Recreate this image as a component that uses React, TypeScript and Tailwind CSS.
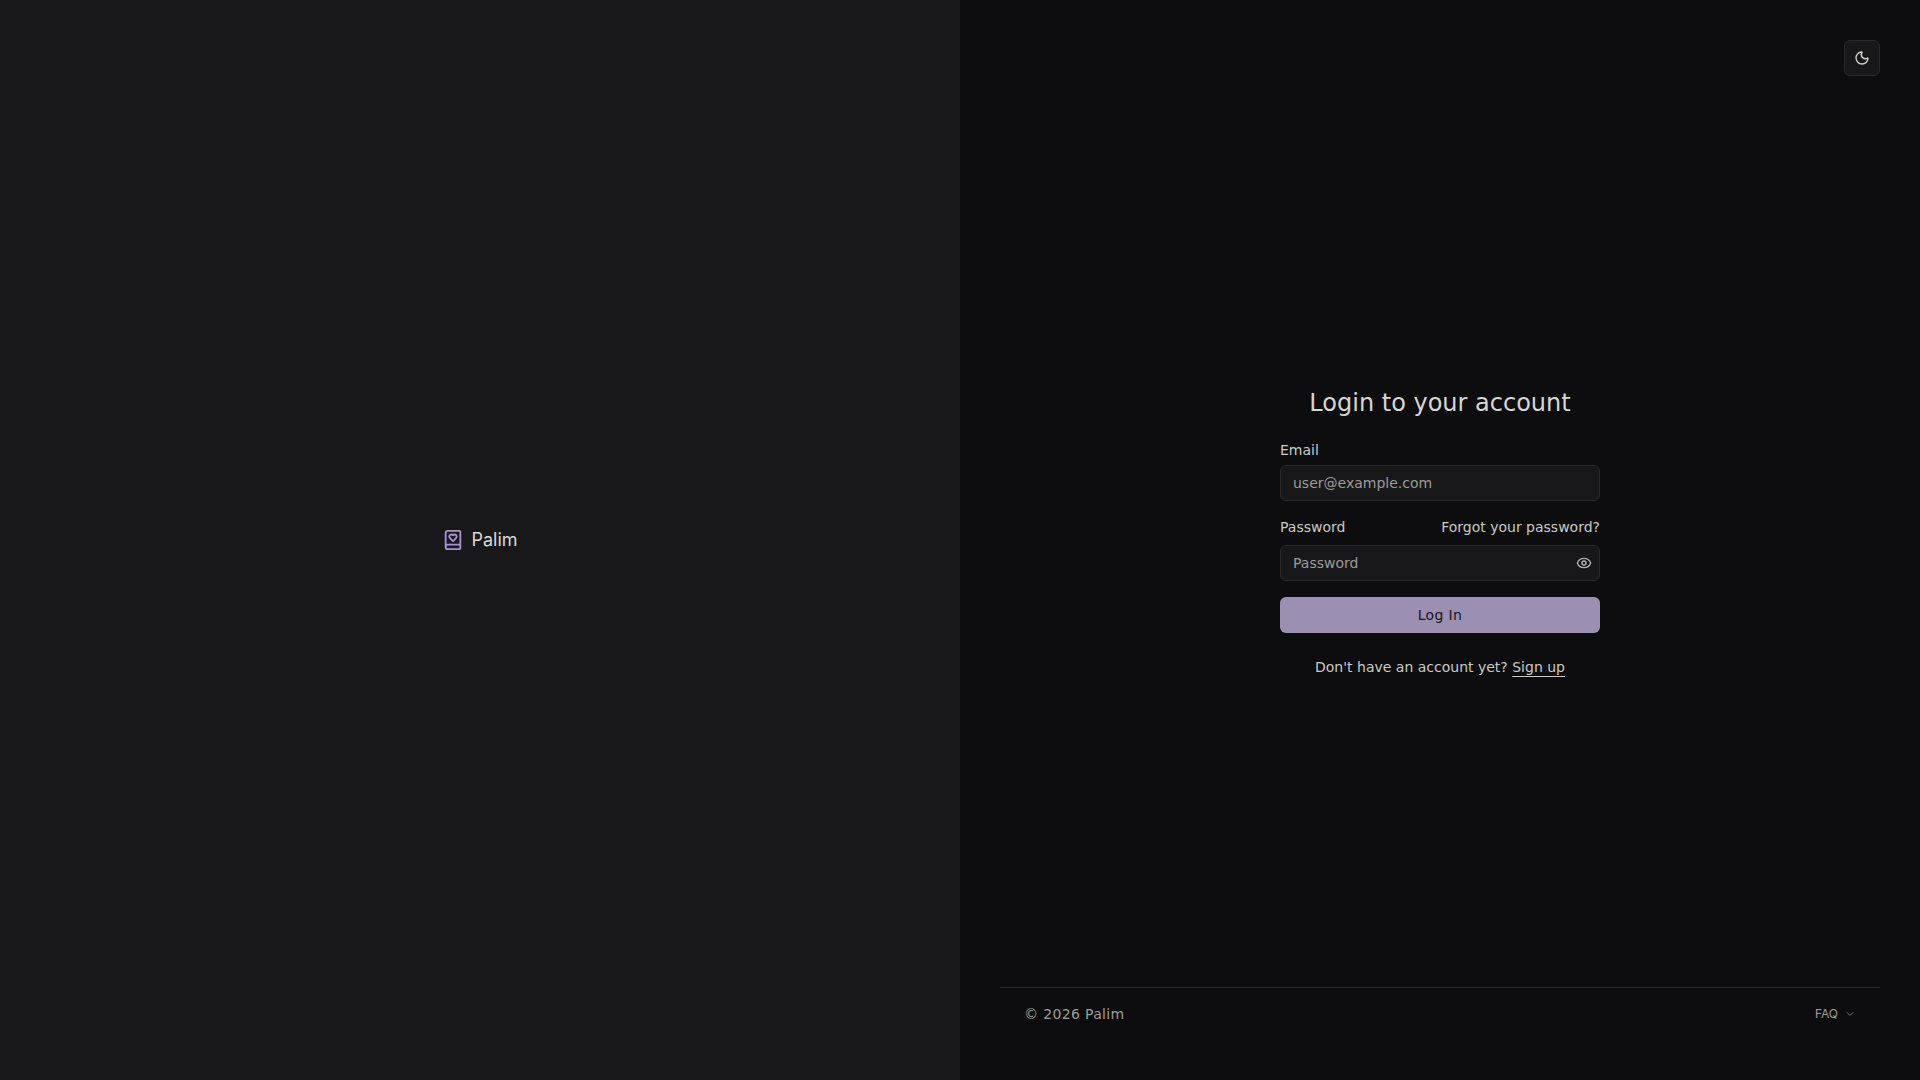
import { BookHeart, ChevronDown, Eye, Moon } from "lucide-react";

const font = "font-['DejaVu_Sans',sans-serif]";

function LogoPanel() {
  return (
    <div className="flex w-1/2 items-center justify-center bg-[#18181a]">
      <div className="flex items-center gap-[7px]">
        <BookHeart className="h-[22px] w-[22px] text-[#a594d0]" strokeWidth={2} />
        <span className="font-['Inter',sans-serif] text-lg text-[#d9d9d6]">Palim</span>
      </div>
    </div>
  );
}

function LoginForm() {
  return (
    <div className="w-80">
      <h1 className="mb-[21px] text-center text-2xl leading-8 text-[#d6d6d2]">Login to your account</h1>

      <label className="mb-[5px] block text-sm leading-5 text-[#cacac6]">Email</label>
      <input
        className="block h-9 w-full rounded-md border border-[#29292b] bg-[#18181a] px-3 text-sm text-[#cacac6] placeholder-[#9c9c99] outline-none"
        placeholder="user@example.com"
        type="text"
      />

      <div className="mt-4 mb-2 flex items-center justify-between text-sm leading-5 text-[#cacac6]">
        <label>Password</label>
        <a href="#">Forgot your password?</a>
      </div>
      <div className="relative">
        <input
          className="block h-9 w-full rounded-md border border-[#29292b] bg-[#18181a] px-3 text-sm text-[#cacac6] placeholder-[#9c9c99] outline-none"
          placeholder="Password"
          type="password"
        />
        <Eye className="absolute top-2.5 right-[8px] h-4 w-4 text-[#b4b4b1]" />
      </div>

      <button className="mt-4 h-9 w-full rounded-md bg-[#9b8fb3] text-sm tracking-wide text-[#18181a]">Log In</button>

      <p className="mt-6 text-center text-sm leading-5 text-[#cacac6]">
        Don't have an account yet?{" "}
        <a href="#" className="underline underline-offset-4">
          Sign up
        </a>
      </p>
    </div>
  );
}

export default function App() {
  return (
    <div className={`${font} flex h-screen w-full bg-[#0d0d0f] antialiased`}>
      <LogoPanel />
      <div className="relative flex w-1/2 flex-col px-10">
        <button className="absolute top-10 right-10 flex h-9 w-9 items-center justify-center rounded-md border border-[#29292b] bg-[#18181a] text-[#d6d6d2]">
          <Moon className="h-4 w-4" />
        </button>
        <main className="flex flex-1 items-center justify-center pt-[77px]">
          <LoginForm />
        </main>
        <footer className="mb-10 flex h-[53px] items-center justify-between border-t border-[#29292b] px-6">
          <span className="text-sm tracking-wide text-[#9c9c99]">© 2026 Palim</span>
          <div className="flex items-center gap-1.5 font-['Inter',sans-serif] text-xs text-[#9c9c99]">
            FAQ
            <ChevronDown className="h-3 w-3 text-[#737371]" />
          </div>
        </footer>
      </div>
    </div>
  );
}
